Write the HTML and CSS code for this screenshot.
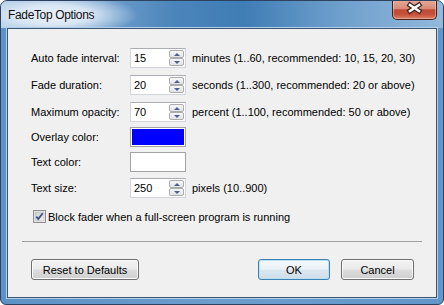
FILE: index.html
```html
<!DOCTYPE html>
<html>
<head>
<meta charset="utf-8">
<title>FadeTop Options</title>
<link rel="stylesheet" href="styles.css">
</head>

<body>
<div class="window">
	<div class="titlebar">
		<span class="title">FadeTop Options</span>
		<span class="close">
			<svg width="45" height="20" viewBox="0 0 45 20">
				<g stroke-linecap="square">
					<path d="M18 6 L27 12 M27 6 L18 12" stroke="#3a2520" stroke-width="5"/>
					<path d="M18 6 L27 12 M27 6 L18 12" stroke="#ffffff" stroke-width="2.6"/>
				</g>
			</svg>
		</span>
	</div>

	<div class="client">
		<div class="form">
			<label>Auto fade interval:</label>
			<div class="spin_box"><span class="val">15</span><span class="spin"><span class="up"></span><span class="down"></span></span></div>
			<span class="note">minutes (1..60, recommended: 10, 15, 20, 30)</span>

			<label>Fade duration:</label>
			<div class="spin_box"><span class="val">20</span><span class="spin"><span class="up"></span><span class="down"></span></span></div>
			<span class="note">seconds (1..300, recommended: 20 or above)</span>

			<label>Maximum opacity:</label>
			<div class="spin_box"><span class="val">70</span><span class="spin"><span class="up"></span><span class="down"></span></span></div>
			<span class="note">percent (1..100, recommended: 50 or above)</span>

			<label>Overlay color:</label>
			<div class="swatch"><span class="fill fill_blue"></span></div>
			<span class="note"></span>

			<label>Text color:</label>
			<div class="swatch"><span class="fill fill_white"></span></div>
			<span class="note"></span>

			<label>Text size:</label>
			<div class="spin_box"><span class="val">250</span><span class="spin"><span class="up"></span><span class="down"></span></span></div>
			<span class="note">pixels (10..900)</span>
		</div>

		<div class="check_row">
			<span class="check">
				<svg width="13" height="13" viewBox="0 0 13 13">
					<defs>
						<linearGradient id="cb" x1="0" y1="0" x2="1" y2="1">
							<stop offset="0" stop-color="#cbcbcb"/>
							<stop offset="1" stop-color="#f4f4f4"/>
						</linearGradient>
					</defs>
					<rect x="0.5" y="0.5" width="12" height="12" fill="#f4f4f4" stroke="#8e8f8f"/>
					<rect x="2" y="2" width="9" height="9" fill="url(#cb)" stroke="#b5b5b5" stroke-width="0.6"/>
					<path d="M3.3 6.6 L5.3 9 L9.7 3.3" fill="none" stroke="#3c4f86" stroke-width="1.8"/>
				</svg>
			</span>
			<span>Block fader when a full-screen program is running</span>
		</div>

		<div class="sep"></div>

		<div class="buttons">
			<button class="btn btn_reset">Reset to Defaults</button>
			<span class="spacer"></span>
			<button class="btn btn_default">OK</button>
			<button class="btn">Cancel</button>
		</div>
	</div>
</div>
</body>
</html>
```

FILE: styles.css
```css
body,div,span,label,button {margin: 0;padding: 0;}
body {width: 444px;height: 305px;overflow: hidden;background: #fff;font: 11px "Liberation Sans", Arial, sans-serif;color: #000;}

/* window frame */
.window {box-sizing: border-box;width: 444px;height: 305px;display: flex;flex-direction: column;overflow: hidden;border: 1px solid #2d4260;border-radius: 7px 7px 6px 6px;background: linear-gradient(to right, #5e92c6, #6b9dcd 50%, #6397ca);}
.titlebar {height: 27px;display: flex;justify-content: space-between;align-items: flex-start;padding: 0 6px 0 7px;
	background: radial-gradient(ellipse 85px 22px at 52px 14px, rgba(235,242,250,1) 0%, rgba(225,236,247,.9) 45%, rgba(200,220,240,0) 100%),
		linear-gradient(to right, #a9c6e3 0%, #7aa6d1 18%, #4a84ba 40%, #3f7db5 55%, #6b9dcb 75%, #93b9dc 100%);}
.title {font-size: 12px;line-height: 14px;margin-top: 7px;letter-spacing: -0.35px;color: #111;}
.close {display: block;width: 45px;height: 20px;margin-top: -1px;box-sizing: border-box;border: 1px solid #4a1e16;border-top: 0 none;border-radius: 0 0 5px 5px;
	background: linear-gradient(#e6ab9b 0%, #d98a77 45%, #c24b34 52%, #c4503a 75%, #db8065 100%);box-shadow: inset 0 0 0 1px rgba(255,220,210,.45);}
.close svg {display: block;margin: -1px 0 0 -1px;}

/* client area */
.client {flex: 1;display: flex;flex-direction: column;margin: 0 6px 6px;border: 1px solid #3a5677;background: #f0f0f0;box-shadow: 0 0 0 1px #b6cfe8;}
.form {display: grid;grid-template-columns: 99px 56px auto;grid-template-rows: 27px 27px 25px 25px 26px 20px;padding: 19px 0 0 23px;}
.form label,
.form .note {height: 20px;line-height: 20px;white-space: nowrap;}
.form .note {padding-left: 6px;}

.spin_box {box-sizing: border-box;width: 56px;height: 20px;display: flex;background: #fff;border: 1px solid #d2d5db;border-top-color: #abadb3;}
.spin_box .val {flex: 1;padding-left: 3px;line-height: 18px;}
.spin {width: 15px;display: flex;flex-direction: column;padding: 1px 1px 1px 0;}
.spin .up,
.spin .down {flex: 1;display: flex;align-items: center;justify-content: center;border: 1px solid #acacac;border-radius: 2px;background: linear-gradient(#f7f7f7, #e3e3e3);}
.spin .up::after {content: "";border-left: 3px solid transparent;border-right: 3px solid transparent;border-bottom: 3px solid #4d6089;}
.spin .down::after {content: "";border-left: 3px solid transparent;border-right: 3px solid transparent;border-top: 3px solid #4d6089;}

.swatch {box-sizing: border-box;width: 56px;height: 20px;padding: 1px;border: 1px solid #a3a3a3;background: #fff;}
.swatch .fill {display: block;height: 100%;}
.fill_blue {background: #0000ff;}
.fill_white {background: #fff;}

.check_row {display: flex;align-items: center;height: 15px;margin-top: 11px;padding-left: 25px;}
.check {display: block;width: 13px;height: 13px;margin-right: 2px;}
.check svg {display: block;}

.sep {height: 0;margin: 17px 14px 0;border-top: 1px solid #a0a0a0;}

.buttons {display: flex;margin-top: 17px;padding: 0 22px 0 23px;}
.spacer {flex: 1;}
.btn {box-sizing: border-box;height: 21px;width: 73px;font: 11px "Liberation Sans", Arial, sans-serif;color: #000;border: 1px solid #707070;border-radius: 3px;
	background: linear-gradient(#f2f2f2 0%, #ebebeb 48%, #dddddd 52%, #cfcfcf 100%);box-shadow: inset 0 0 0 1px #fbfbfb;}
.btn_reset {width: 108px;}
.btn_default {width: 72px;margin-right: 11px;border-color: #3c7fb1;box-shadow: inset 0 0 0 1px #b8e0f6;background: linear-gradient(#f3f8fb 0%, #eaf2f7 48%, #dbe7ef 52%, #ceddea 100%);}
```
